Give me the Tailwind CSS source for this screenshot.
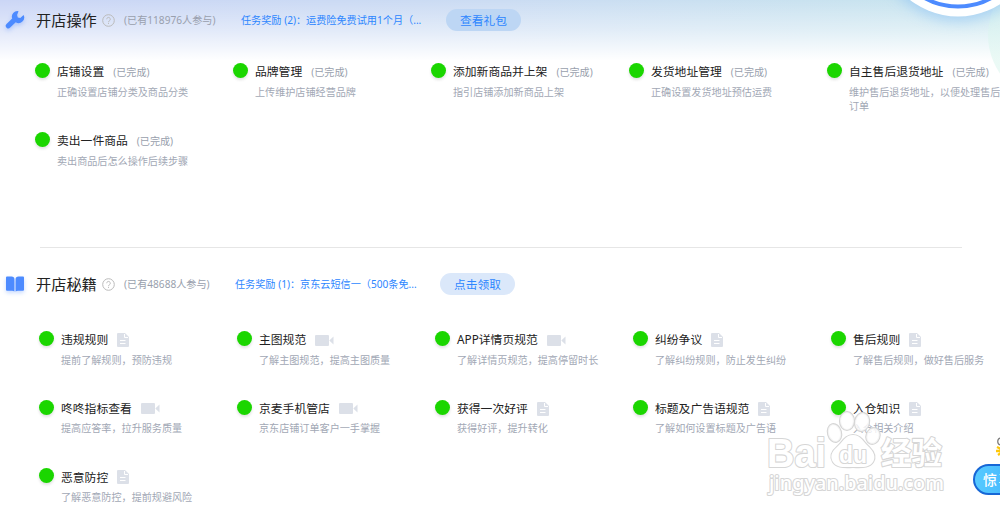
<!DOCTYPE html>
<html lang="zh-CN">
<head>
    <meta charset="UTF-8">
    <meta name="viewport" content="width=device-width, initial-scale=1.0">
    <title>开店任务</title>
    <script src="https://cdn.jsdelivr.net/npm/@tailwindcss/browser@4"></script>
</head>
<body class="relative w-[1000px] h-[518px] overflow-hidden bg-white font-['Noto_Sans','Noto_Sans_CJK_SC',sans-serif] text-[#222]">
    <!-- header tint and decorations -->
    <div class="absolute inset-x-0 top-0 h-[60px] bg-linear-to-r from-[#cbd6f6] via-[#cbdcf3] to-[#c8e6ee]"></div>
    <div class="absolute inset-x-0 top-0 h-[61px] bg-linear-to-b from-white/0 via-white/45 to-white"></div>
    <svg class="absolute top-0 right-0" width="140" height="110" viewBox="860 0 140 110">
        <defs>
            <filter id="glow" x="-30%" y="-30%" width="160%" height="160%"><feGaussianBlur stdDeviation="7" /></filter>
            <linearGradient id="mint" x1="0" y1="0" x2="0" y2="1">
                <stop offset="0" stop-color="#d5f2ee" stop-opacity="0.4" />
                <stop offset="1" stop-color="#e2f8f0" stop-opacity="0.7" />
            </linearGradient>
        </defs>
        <circle cx="1056" cy="35" r="68" fill="url(#mint)" />
        <circle cx="958" cy="-57" r="78" fill="#8cc1f5" opacity="0.6" filter="url(#glow)" />
        <circle cx="958" cy="-61.5" r="78" fill="#fff" />
        <circle cx="958" cy="-61.5" r="68" fill="none" stroke="#4d8bff" stroke-width="4" />
    </svg>

    <main class="relative">
        <section class="h-[247px]">
            <header class="flex items-center h-10">
                <svg class="ml-[5px] w-5 h-5 drop-shadow-[0_2px_2px_#4d8bff55]" viewBox="0 0 20 20">
                    <path d="M13.5 1.2a5.6 5.6 0 0 0-6.3 7.4L1.5 14a2.5 2.5 0 0 0 3.7 3.6l5.5-5.4a5.6 5.6 0 0 0 7.9-7.3l-3.3 3.2-2.5-.5-.7-2.7z" fill="#4d8bff" />
                </svg>
                <h2 class="ml-[11px] w-[61px] text-[15.2px] leading-5 whitespace-nowrap">开店操作</h2>
                <svg class="ml-[5px] w-[13px] h-[13px]" viewBox="0 0 13 13" fill="none" stroke="#bbb">
                    <circle cx="6.5" cy="6.5" r="5.8" />
                    <path d="M4.7 5.2a1.8 1.8 0 1 1 2.7 1.6q-.9.5-.9 1.2M6.5 8.8v1.1" />
                </svg>
                <span class="ml-[9px] w-[117px] pt-px text-[10.15px] text-[#999fad] whitespace-nowrap">(已有118976人参与)</span>
                <span class="w-[205px] pt-px text-[10.15px] text-[#2d86ff] whitespace-nowrap">任务奖励 (2)：运费险免费试用1个月（...</span>
                <a class="w-[75px] h-[22px] rounded-full bg-[#bdd6f4] text-center text-[11.7px] leading-[22px] text-[#2d86ff]">查看礼包</a>
            </header>
            <div id="setup" class="grid grid-cols-[repeat(5,198px)] auto-rows-[69px] pt-[23px] pl-[35px]"></div>
        </section>

        <hr class="ml-10 w-[922px] border-[#e6e6e6]">

        <section>
            <header class="flex items-center h-[72px]">
                <svg class="ml-[5px] w-5 h-5 drop-shadow-[0_2px_2px_#4d8bff55]" viewBox="0 0 20 20" fill="#4d8bff">
                    <path d="M1 3.5Q1 2.5 2 2.5H6.5Q9.4 2.7 9.4 5V17.5Q8.5 16.7 7 16.7H2Q1 16.7 1 15.7z" />
                    <path d="M19 3.5Q19 2.5 18 2.5H13.5Q10.6 2.7 10.6 5V17.5Q11.5 16.7 13 16.7H18Q19 16.7 19 15.7z" />
                </svg>
                <h2 class="ml-[11px] w-[61px] text-[15.2px] leading-5 whitespace-nowrap">开店秘籍</h2>
                <svg class="ml-[5px] w-[13px] h-[13px]" viewBox="0 0 13 13" fill="none" stroke="#bbb">
                    <circle cx="6.5" cy="6.5" r="5.8" />
                    <path d="M4.7 5.2a1.8 1.8 0 1 1 2.7 1.6q-.9.5-.9 1.2M6.5 8.8v1.1" />
                </svg>
                <span class="ml-[9px] w-[111px] pt-px text-[10.15px] text-[#999fad] whitespace-nowrap">(已有48688人参与)</span>
                <span class="w-[205px] pt-px text-[10.15px] text-[#2d86ff] whitespace-nowrap">任务奖励 (1)：京东云短信一（500条免...</span>
                <a class="w-[75px] h-[22px] rounded-full bg-[#dbe8fa] text-center text-[11.7px] leading-[22px] text-[#2d86ff]">点击领取</a>
            </header>
            <div id="tips" class="grid grid-cols-[repeat(5,198px)] auto-rows-[68.7px] pt-[11px] pl-[39px]"></div>
        </section>
    </main>

    <!-- watermark -->
    <svg class="absolute left-[760px] top-[405px]" width="195" height="95" viewBox="760 405 195 95" fill="#fff" stroke="#d6d6d6" stroke-width="2.2" stroke-linejoin="round" paint-order="stroke">
        <g font-family="Liberation Sans, Noto Sans CJK SC, sans-serif" font-weight="bold">
            <text x="767" y="467" font-size="41" textLength="59" lengthAdjust="spacingAndGlyphs">Bai</text>
            <g fill-opacity="0.75">
                <ellipse cx="847" cy="421" rx="7" ry="9" />
                <ellipse cx="862" cy="422" rx="7" ry="9" transform="rotate(12 862 422)" />
                <ellipse cx="834.5" cy="433" rx="6.5" ry="9" transform="rotate(-15 834.5 433)" />
                <ellipse cx="873" cy="436" rx="6.5" ry="8" transform="rotate(20 873 436)" />
            </g>
            <path d="M853 435c-8 0-11 8-16 12-6 5-7 10-4 15 4 6 11 5 20 5s16 1 20-5c3-5 1-10-4-15-5-4-8-12-16-12z" />
            <text x="839" y="463" font-size="24" textLength="28" lengthAdjust="spacingAndGlyphs">du</text>
            <text x="881" y="464" font-size="31" textLength="61" lengthAdjust="spacingAndGlyphs">经验</text>
        </g>
        <text x="769" y="490" font-size="20" font-family="Noto Sans, sans-serif" font-weight="500" textLength="175" lengthAdjust="spacingAndGlyphs">jingyan.baidu.com</text>
    </svg>

    <!-- floating promo -->
    <svg class="absolute left-[990px] top-[436px]" width="10" height="22" viewBox="0 0 10 22" fill="none">
        <path d="M10 2C7 3 7 8 10 9" stroke="#777" stroke-width="1.2" />
        <path d="M7 11l4 2M6 15h5M8 19l3-2" stroke="#ffc80a" stroke-width="2.4" />
    </svg>
    <div class="absolute left-[973px] top-[464px] w-[70px] h-[31px] rounded-full border-2 border-[#1767d6] bg-linear-to-r from-[#57caff] to-[#38a9ff] pl-2 text-[14px] leading-[28px] tracking-[1.5px] text-white font-medium whitespace-nowrap">惊喜</div>

    <script>
        const setup = [
            ['店铺设置', 'done', '正确设置店铺分类及商品分类'],
            ['品牌管理', 'done', '上传维护店铺经营品牌'],
            ['添加新商品并上架', 'done', '指引店铺添加新商品上架'],
            ['发货地址管理', 'done', '正确设置发货地址预估运费'],
            ['自主售后退货地址', 'done', '维护售后退货地址，以便处理售后<br>订单'],
            ['卖出一件商品', 'done', '卖出商品后怎么操作后续步骤'],
        ];
        const tips = [
            ['违规规则', 'doc', '提前了解规则，预防违规'],
            ['主图规范', 'video', '了解主图规范，提高主图质量'],
            ['APP详情页规范', 'video', '了解详情页规范，提高停留时长'],
            ['纠纷争议', 'doc', '了解纠纷规则，防止发生纠纷'],
            ['售后规则', 'doc', '了解售后规则，做好售后服务'],
            ['咚咚指标查看', 'video', '提高应答率，拉升服务质量'],
            ['京麦手机管店', 'video', '京东店铺订单客户一手掌握'],
            ['获得一次好评', 'doc', '获得好评，提升转化'],
            ['标题及广告语规范', 'doc', '了解如何设置标题及广告语'],
            ['入仓知识', 'doc', '入仓相关介绍'],
            ['恶意防控', 'doc', '了解恶意防控，提前规避风险'],
        ];
        const marks = {
            done: '<span class="pt-px text-[10.1px] text-[#999fad]">(已完成)</span>',
            doc: '<svg class="w-3 h-[14px]" viewBox="0 0 12 14"><path d="M1 0h7l4 4v9q0 1-1 1H1q-1 0-1-1V1q0-1 1-1z" fill="#dce0e8"/><path d="M7.5 1v3.5H11M3 7.5h5.5M3 10.5h5.5" fill="none" stroke="#fff"/></svg>',
            video: '<svg class="w-[19px] h-[11px]" viewBox="0 0 19 11"><path d="M1 0h12q1 0 1 1v9q0 1-1 1H1q-1 0-1-1V1q0-1 1-1zM14.3 5.5L18.5 1.5v8z" fill="#dce0e8"/></svg>',
        };

        function renderItems(id, items) {
            document.getElementById(id).innerHTML = items.map(([title, mark, desc]) => `
                <div class="flex gap-[7px] whitespace-nowrap">
                    <i class="w-[15px] h-[15px] shrink-0 rounded-full bg-[#1bd600] shadow-[0_2px_3px_#0000001f]"></i>
                    <div>
                        <div class="flex items-center gap-[9px] h-[18px] text-[11.8px]"><span>${title}</span>${marks[mark]}</div>
                        <p class="mt-[3.5px] text-[10.1px] leading-[14px] text-[#a2a8b5]">${desc}</p>
                    </div>
                </div>`).join('');
        }

        renderItems('setup', setup);
        renderItems('tips', tips);
    </script>
</body>
</html>
